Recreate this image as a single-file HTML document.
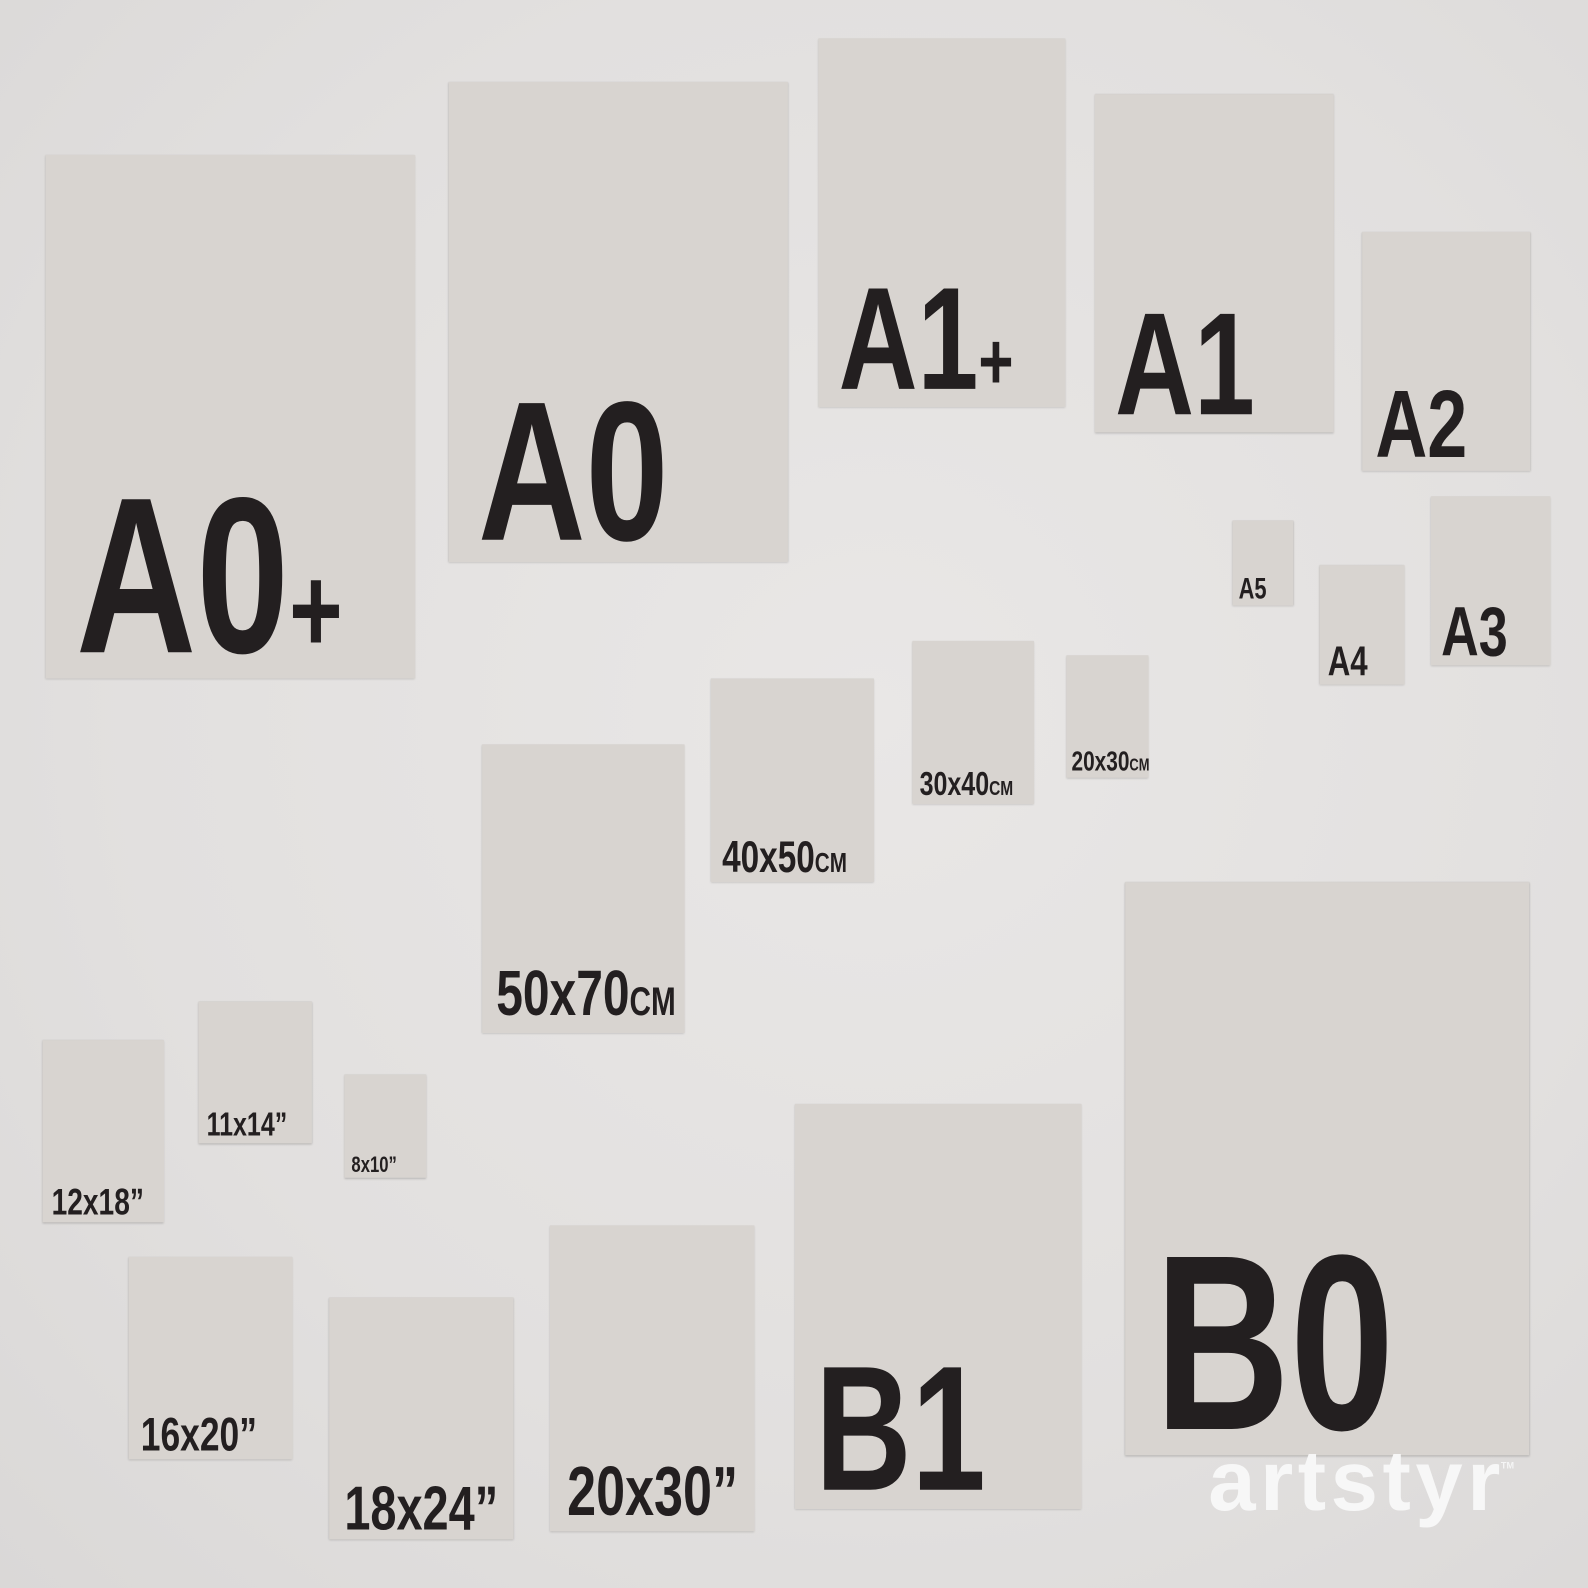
<!DOCTYPE html>
<html><head><meta charset="utf-8">
<style>
html,body{margin:0;padding:0;width:1588px;height:1588px;overflow:hidden;}
body{background:radial-gradient(ellipse at 55% 45%,#e9e7e6 0%,#e2e0df 60%,#dad8d7 100%);}
#w{position:absolute;left:0;top:0;width:1568px;height:1568px;transform:scale(1.01276);transform-origin:0 0;}
.c{position:absolute;background:#d8d4d0;box-shadow:0 1px 2px rgba(0,0,0,.18),0 0 1px rgba(0,0,0,.1);}
.t{position:absolute;font-family:"Liberation Sans",sans-serif;font-weight:bold;color:#231f20;line-height:1;white-space:nowrap;
font-size:calc(var(--c)*1px/0.729);margin-top:calc(var(--c)*-0.1612px);transform:scaleX(.75);transform-origin:0 0;}
.t small{font-size:62%;}
.t .p{font-size:55%;}
.logo{position:absolute;left:1193px;top:1420px;font-family:"Liberation Sans",sans-serif;font-weight:bold;color:#f7f7f7;font-size:84px;letter-spacing:4.5px;line-height:1;}
.tm{position:absolute;left:1482px;top:1442px;font-family:"Liberation Sans",sans-serif;font-weight:bold;color:#f5f5f5;font-size:9px;}
</style></head><body><div id="w">
<div class="c" style="left:45px;top:153px;width:365px;height:517px"></div>
<div class="t" style="--c:160;left:75px;top:485px">A0<span class="p">+</span></div>
<div class="c" style="left:443px;top:81px;width:335px;height:474px"></div>
<div class="t" style="--c:143;left:472px;top:390px">A0</div>
<div class="c" style="left:808px;top:38px;width:244px;height:364px"></div>
<div class="t" style="--c:105;left:828px;top:280px">A1<span class="p">+</span></div>
<div class="c" style="left:1081px;top:93px;width:236px;height:334px"></div>
<div class="t" style="--c:105;left:1101px;top:305px">A1</div>
<div class="c" style="left:1345px;top:229px;width:166px;height:236px"></div>
<div class="t" style="--c:69;left:1358px;top:383px">A2</div>
<div class="c" style="left:1413px;top:490px;width:118px;height:167px"></div>
<div class="t" style="--c:50;left:1423px;top:598px">A3</div>
<div class="c" style="left:1303px;top:558px;width:84px;height:118px"></div>
<div class="t" style="--c:30;left:1311px;top:638px">A4</div>
<div class="c" style="left:1217px;top:514px;width:60px;height:84px"></div>
<div class="t" style="--c:21;left:1223px;top:571px">A5</div>
<div class="c" style="left:1053px;top:647px;width:81px;height:121px"></div>
<div class="t" style="--c:20;left:1058px;top:741px">20x30<small>CM</small></div>
<div class="c" style="left:901px;top:633px;width:120px;height:161px"></div>
<div class="t" style="--c:24;left:908px;top:762px">30x40<small>CM</small></div>
<div class="c" style="left:702px;top:670px;width:161px;height:201px"></div>
<div class="t" style="--c:32;left:713px;top:830px">40x50<small>CM</small></div>
<div class="c" style="left:476px;top:735px;width:200px;height:285px"></div>
<div class="t" style="--c:46;left:490px;top:957px">50x70<small>CM</small></div>
<div class="c" style="left:42px;top:1027px;width:120px;height:180px"></div>
<div class="t" style="--c:27;left:51px;top:1172px">12x18”</div>
<div class="c" style="left:196px;top:989px;width:112px;height:140px"></div>
<div class="t" style="--c:24;left:204px;top:1098px">11x14”</div>
<div class="c" style="left:340px;top:1061px;width:81px;height:102px"></div>
<div class="t" style="--c:16;left:347px;top:1142px">8x10”</div>
<div class="c" style="left:127px;top:1241px;width:162px;height:200px"></div>
<div class="t" style="--c:34;left:139px;top:1398px">16x20”</div>
<div class="c" style="left:325px;top:1281px;width:182px;height:239px"></div>
<div class="t" style="--c:45;left:340px;top:1466px">18x24”</div>
<div class="c" style="left:543px;top:1210px;width:202px;height:302px"></div>
<div class="t" style="--c:50;left:560px;top:1447px">20x30”</div>
<div class="c" style="left:785px;top:1090px;width:283px;height:400px"></div>
<div class="t" style="--c:128;left:805px;top:1345px">B1</div>
<div class="c" style="left:1111px;top:871px;width:399px;height:566px"></div>
<div class="t" style="--c:180;left:1140px;top:1232px">B0</div>
<div class="logo">artstyr</div>
<div class="tm">TM</div>
</div></body></html>
